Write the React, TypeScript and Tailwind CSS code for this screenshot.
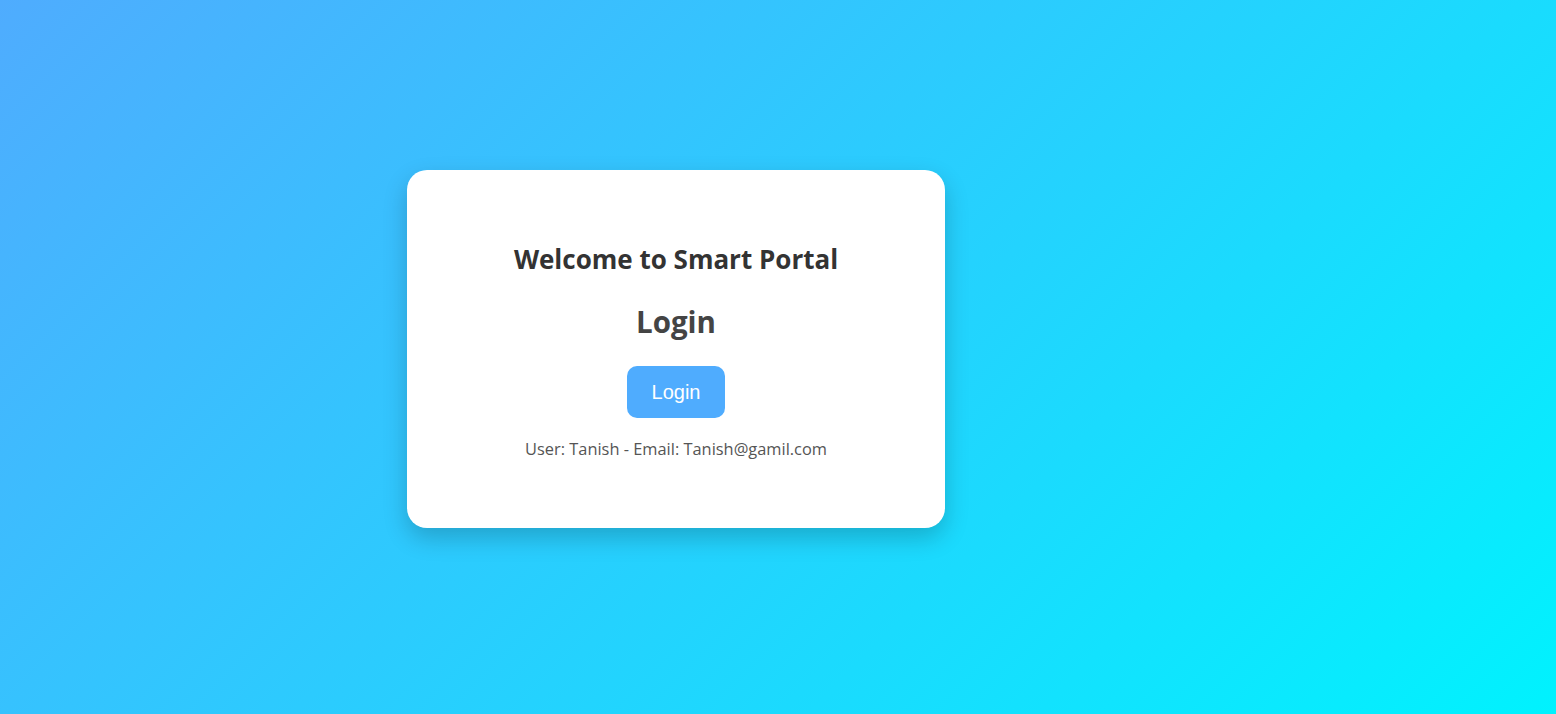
export default function App() {
  return (
    <div
      className="min-h-screen w-full bg-[linear-gradient(135deg,#4facfe_0%,#00f2fe_100%)] pt-[170px]"
      style={{ fontFamily: '"Open Sans", "Noto Sans", sans-serif' }}
    >
      <div className="ml-[407px] flex h-[358px] w-[538px] flex-col items-center rounded-[20px] bg-white pt-[73px] shadow-[0_10px_25px_rgba(0,0,0,0.2)]">
        <h1 className="text-[26px] leading-[32px] font-bold text-[#333]">Welcome to Smart Portal</h1>
        <h2 className="mt-[29px] text-[29.5px] leading-[36px] font-bold text-[#444]">Login</h2>
        <button
          className="mt-[26px] h-[52px] w-[98px] rounded-[10px] bg-[#4facfe] text-[20px] text-white"
          style={{ fontFamily: '"Liberation Sans", Arial, sans-serif' }}
        >
          Login
        </button>
        <p className="mt-[19px] text-[16.4px] leading-[24px] text-[#555]">User: Tanish - Email: Tanish@gamil.com</p>
      </div>
    </div>
  );
}
